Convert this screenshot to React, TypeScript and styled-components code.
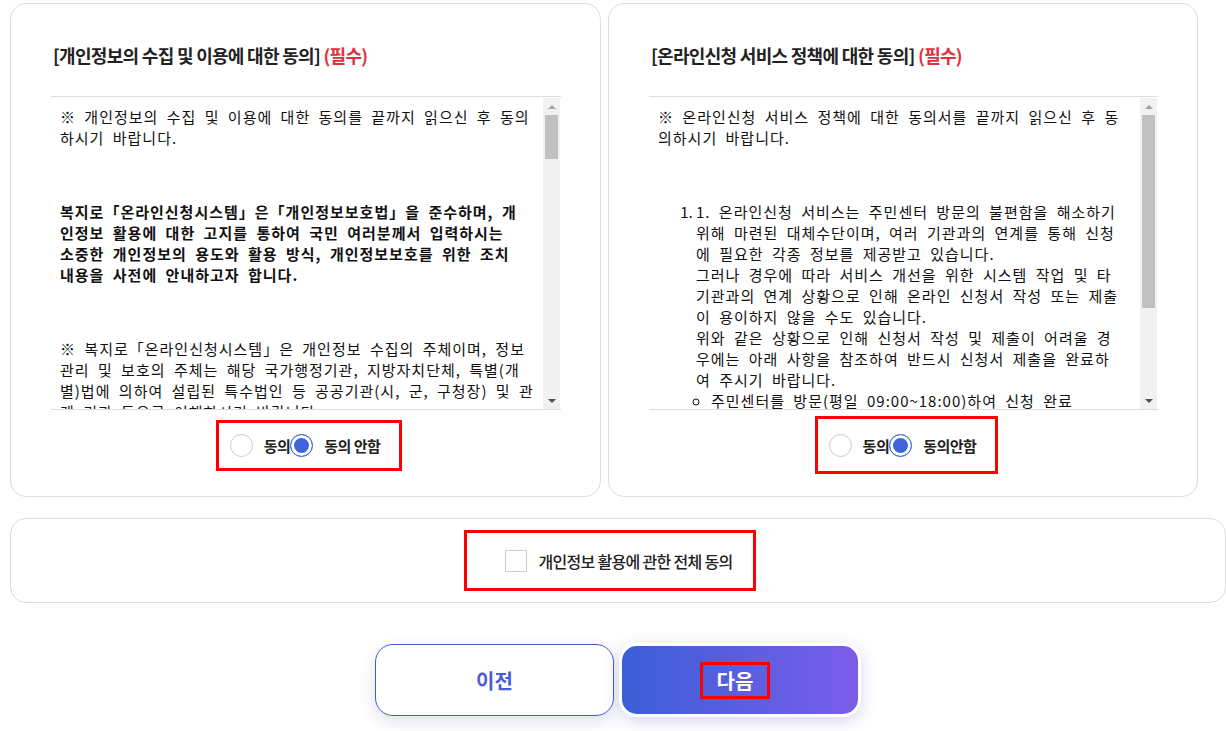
import React, { useState } from "react";
import styled, { createGlobalStyle } from "styled-components";

const GlobalStyle = createGlobalStyle`
  body {
    margin: 0;
    background: #ffffff;
    font-family: "Noto Sans CJK KR", "Noto Sans", sans-serif;
    color: #111111;
  }
`;

type Choice = "yes" | "no";

const App = () => {
  const [privacy, setPrivacy] = useState<Choice>("no");
  const [service, setService] = useState<Choice>("no");
  const [allAgree, setAllAgree] = useState(false);

  return (
    <Page>
      <GlobalStyle />
      <TopRow>
        <Card>
          <Title>
            [개인정보의 수집 및 이용에 대한 동의] <Required>(필수)</Required>
          </Title>
          <ScrollFrame>
            <TextArea>
              <p>
                ※ 개인정보의 수집 및 이용에 대한 동의를 끝까지 읽으신 후 동의
                <br />
                하시기 바랍니다.
              </p>
              <p>&nbsp;</p>
              <BoldPara>
                복지로「온라인신청시스템」은「개인정보보호법」을 준수하며, 개
                <br />
                인정보 활용에 대한 고지를 통하여 국민 여러분께서 입력하시는
                <br />
                소중한 개인정보의 용도와 활용 방식, 개인정보보호를 위한 조치
                <br />
                내용을 사전에 안내하고자 합니다.
              </BoldPara>
              <p>&nbsp;</p>
              <p>
                ※ 복지로「온라인신청시스템」은 개인정보 수집의 주체이며, 정보
                <br />
                관리 및 보호의 주체는 해당 국가행정기관, 지방자치단체, 특별(개
                <br />
                별)법에 의하여 설립된 특수법인 등 공공기관(시, 군, 구청장) 및 관
                <br />
                계 기관 등으로 이해하시기 바랍니다.
              </p>
            </TextArea>
            <Scrollbar thumb={44} />
          </ScrollFrame>
          <RadioRow>
            <RadioGroup $height={51}>
              <RadioOption onClick={() => setPrivacy("yes")}>
                <RadioDot $checked={privacy === "yes"} />
                <RadioLabel>동의</RadioLabel>
              </RadioOption>
              <RadioOption onClick={() => setPrivacy("no")}>
                <RadioDot $checked={privacy === "no"} />
                <RadioLabel>동의 안함</RadioLabel>
              </RadioOption>
            </RadioGroup>
          </RadioRow>
        </Card>

        <Card>
          <Title>
            [온라인신청 서비스 정책에 대한 동의] <Required>(필수)</Required>
          </Title>
          <ScrollFrame>
            <TextArea>
              <p>
                ※ 온라인신청 서비스 정책에 대한 동의서를 끝까지 읽으신 후 동
                <br />
                의하시기 바랍니다.
              </p>
              <p>&nbsp;</p>
              <OrderedList>
                <li>
                  1. 온라인신청 서비스는 주민센터 방문의 불편함을 해소하기
                  <br />
                  위해 마련된 대체수단이며, 여러 기관과의 연계를 통해 신청
                  <br />
                  에 필요한 각종 정보를 제공받고 있습니다.
                  <br />
                  그러나 경우에 따라 서비스 개선을 위한 시스템 작업 및 타
                  <br />
                  기관과의 연계 상황으로 인해 온라인 신청서 작성 또는 제출
                  <br />
                  이 용이하지 않을 수도 있습니다.
                  <br />
                  위와 같은 상황으로 인해 신청서 작성 및 제출이 어려울 경
                  <br />
                  우에는 아래 사항을 참조하여 반드시 신청서 제출을 완료하
                  <br />
                  여 주시기 바랍니다.
                  <SubList>
                    <li>주민센터를 방문(평일 09:00~18:00)하여 신청 완료</li>
                    <li>복지로 고객센터(129)로 문의</li>
                  </SubList>
                </li>
              </OrderedList>
            </TextArea>
            <Scrollbar thumb={193} />
          </ScrollFrame>
          <RadioRow>
            <RadioGroup $height={58}>
              <RadioOption onClick={() => setService("yes")}>
                <RadioDot $checked={service === "yes"} />
                <RadioLabel>동의</RadioLabel>
              </RadioOption>
              <RadioOption onClick={() => setService("no")}>
                <RadioDot $checked={service === "no"} />
                <RadioLabel>동의안함</RadioLabel>
              </RadioOption>
            </RadioGroup>
          </RadioRow>
        </Card>
      </TopRow>

      <AllAgreeCard>
        <CheckGroup onClick={() => setAllAgree(!allAgree)}>
          <CheckBox $checked={allAgree} />
          <CheckLabel>개인정보 활용에 관한 전체 동의</CheckLabel>
        </CheckGroup>
      </AllAgreeCard>

      <ButtonRow>
        <PrevButton>이전</PrevButton>
        <NextButton>
          <NextText>다음</NextText>
        </NextButton>
      </ButtonRow>
    </Page>
  );
};

const Scrollbar = ({ thumb }: { thumb: number }) => (
  <Track>
    <ArrowButton>
      <ArrowUp />
    </ArrowButton>
    <Thumb style={{ height: thumb }} />
    <TrackFill />
    <ArrowButton>
      <ArrowDown />
    </ArrowButton>
  </Track>
);

export default App;

const Page = styled.div`
  width: 1216px;
  padding: 3px 0 20px 10px;
`;

const TopRow = styled.div`
  display: grid;
  grid-template-columns: 591px 590px;
  column-gap: 7px;
`;

const Card = styled.div`
  box-sizing: border-box;
  height: 494px;
  border: 1px solid #dddddd;
  border-radius: 16px;
  padding: 39px 39px 0 40px;
  display: flex;
  flex-direction: column;
`;

const Title = styled.h3`
  margin: 0 0 28px 0;
  padding-left: 2px;
  font-size: 18px;
  line-height: 25px;
  font-weight: 700;
  letter-spacing: -0.7px;
  color: #222222;
`;

const Required = styled.span`
  color: #e0303d;
`;

const ScrollFrame = styled.div`
  display: flex;
  box-sizing: border-box;
  height: 314px;
  border-top: 1px solid #dddddd;
  border-bottom: 1px solid #dddddd;
  padding-top: 1px;
`;

const TextArea = styled.div`
  flex: 1;
  overflow: hidden;
  padding: 8px 6px 0 9px;
  font-size: 15px;
  line-height: 21px;
  letter-spacing: 1px;
  word-spacing: 4px;
  color: #111111;
  white-space: nowrap;

  & p {
    margin: 16px 0;
  }
  & p:first-child {
    margin-top: 0;
  }
`;

const BoldPara = styled.p`
  font-weight: 700;
`;

const OrderedList = styled.ol`
  margin: 16px 0;
  padding-left: 38px;

  & > li::marker {
    letter-spacing: 0;
    word-spacing: 0;
  }
`;

const SubList = styled.ul`
  margin: 0;
  padding-left: 15px;
  list-style: circle;
`;

const Track = styled.div`
  width: 17px;
  margin-right: 1px;
  background: #f1f1f1;
  display: flex;
  flex-direction: column;
  align-items: center;
`;

const ArrowButton = styled.div`
  width: 17px;
  height: 17px;
  display: flex;
  align-items: center;
  justify-content: center;
`;

const ArrowUp = styled.div`
  width: 0;
  height: 0;
  border-left: 4px solid transparent;
  border-right: 4px solid transparent;
  border-bottom: 4px solid #a3a3a3;
`;

const ArrowDown = styled.div`
  width: 0;
  height: 0;
  border-left: 4px solid transparent;
  border-right: 4px solid transparent;
  border-top: 4px solid #505050;
`;

const Thumb = styled.div`
  width: 13px;
  background: #c1c1c1;
`;

const TrackFill = styled.div`
  flex: 1;
`;

const RadioRow = styled.div`
  display: flex;
  justify-content: center;
  align-items: center;
  height: 58px;
  margin-top: 6px;
  padding-left: 6px;
`;

const RadioGroup = styled.div<{ $height: number }>`
  display: flex;
  align-items: center;
  box-sizing: border-box;
  height: ${(p) => p.$height}px;
  border: 3px solid #ff0000;
  padding: 0 19px 0 11px;
`;

const RadioOption = styled.label`
  display: flex;
  align-items: center;
  cursor: pointer;
`;

const RadioDot = styled.span<{ $checked: boolean }>`
  box-sizing: border-box;
  width: 23px;
  height: 23px;
  border-radius: 50%;
  border: 1px solid ${(p) => (p.$checked ? "#4468e0" : "#cccccc")};
  background: ${(p) => (p.$checked ? "#3f63dd" : "#ffffff")};
  box-shadow: ${(p) => (p.$checked ? "inset 0 0 0 3px #ffffff" : "none")};
`;

const RadioLabel = styled.span`
  margin-left: 11px;
  font-size: 15px;
  font-weight: 700;
  letter-spacing: -0.5px;
  color: #222222;
`;

const AllAgreeCard = styled.div`
  box-sizing: border-box;
  margin-top: 21px;
  height: 85px;
  border: 1px solid #dddddd;
  border-radius: 16px;
  display: flex;
  align-items: center;
  justify-content: center;
  padding-right: 16px;
`;

const CheckGroup = styled.label`
  display: flex;
  align-items: center;
  box-sizing: border-box;
  height: 61px;
  border: 3px solid #ff0000;
  padding: 0 21px 0 38px;
  cursor: pointer;
`;

const CheckBox = styled.span<{ $checked: boolean }>`
  box-sizing: border-box;
  width: 22px;
  height: 22px;
  border: 1px solid #c5cde0;
  background: ${(p) => (p.$checked ? "#3f63dd" : "#ffffff")};
`;

const CheckLabel = styled.span`
  margin-left: 12px;
  font-size: 16px;
  font-weight: 500;
  letter-spacing: -0.7px;
  color: #222222;
`;

const ButtonRow = styled.div`
  margin-top: 40px;
  display: flex;
  justify-content: center;
  align-items: center;
  gap: 5px;
`;

const PrevButton = styled.button`
  box-sizing: border-box;
  width: 239px;
  height: 72px;
  border: 1px solid #3b5bdb;
  border-radius: 18px;
  background: #ffffff;
  color: #4a5bd6;
  font-family: "Noto Sans CJK KR", sans-serif;
  font-size: 20px;
  font-weight: 700;
  box-shadow: 0 6px 16px rgba(60, 60, 140, 0.15);
  cursor: pointer;
`;

const NextButton = styled.button`
  box-sizing: border-box;
  width: 242px;
  height: 74px;
  border: 3px solid #ffffff;
  border-radius: 18px;
  background: linear-gradient(90deg, #3a5fd6 0%, #7b5de9 100%);
  color: #ffffff;
  font-family: "Noto Sans CJK KR", sans-serif;
  font-size: 20px;
  font-weight: 700;
  box-shadow: 0 4px 16px rgba(90, 90, 200, 0.25);
  display: flex;
  align-items: center;
  justify-content: center;
  padding-right: 16px;
  cursor: pointer;
`;

const NextText = styled.span`
  box-sizing: border-box;
  display: flex;
  align-items: center;
  justify-content: center;
  width: 70px;
  height: 37px;
  border: 3px solid #ff0000;
`;
